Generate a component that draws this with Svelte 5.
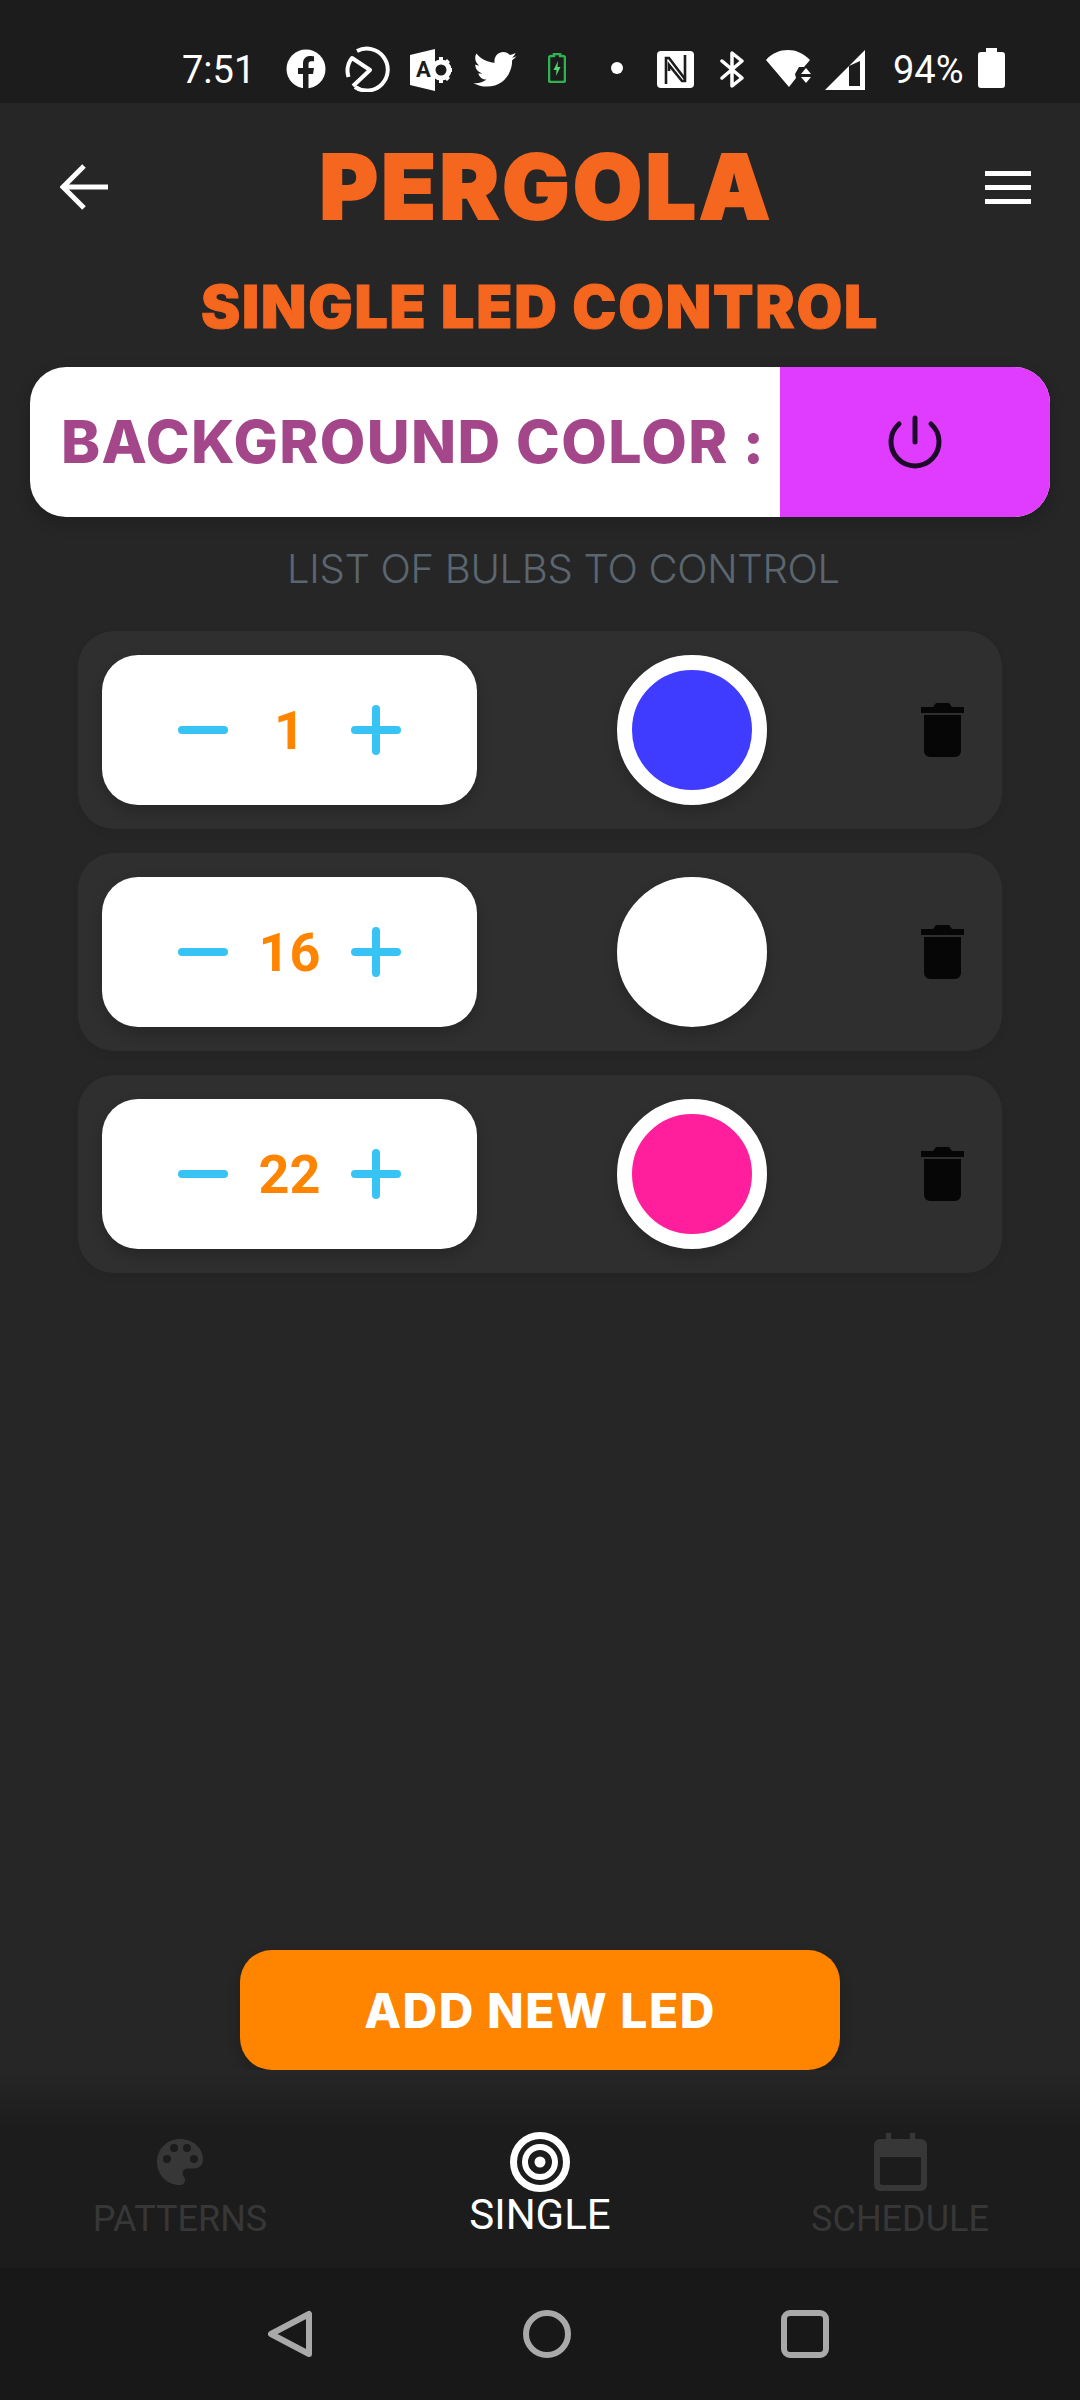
<script lang="ts">
const bulbs = [
  { id: 1, color: "#3f3bff" },
  { id: 16, color: "#ffffff" },
  { id: 22, color: "#ff1f9c" },
];
</script>

<div class="page">
  <div class="status">
    <span class="time">7:51</span>
    <!-- facebook -->
    <svg class="s-fb" width="40" height="40" viewBox="0 0 40 40">
      <circle cx="20" cy="20" r="19.5" fill="#fff" />
      <path d="M17 40V25h-5v-6h5v-4.500c0-5 3-7.500 7.300-7.500 2 0 3.700.3 3.700.3v5h-2.500c-2.500 0-3 1.300-3 2.900V19h5.500l-1 6H22.500v15z" fill="#1c1c1c" />
    </svg>
    <!-- pie style app icon -->
    <svg class="s-pie" width="46" height="46" viewBox="0 0 46 46" fill="none" stroke="#fff" stroke-width="4">
      <path d="M12 5A21 21 0 1 1 10 41" />
      <path d="M3.500 31A21 21 0 0 1 7 12L25 24 8 40" stroke-linejoin="round" />
    </svg>
    <!-- access / admin -->
    <svg class="s-acc" width="42" height="42" viewBox="0 0 42 42">
      <path d="M0 6 25 0v42L0 36z" fill="#fff" />
      <text x="6" y="28" class="acc-a">A</text>
      <circle cx="31" cy="21" r="8" fill="none" stroke="#fff" stroke-width="5" />
      <path d="M29 8h4v5h-4zM29 29h4v5h-4zM38 19h4v4h-4zM37 10l3 3-3 3-3-3zM37 26l3 3-3 3-3-3z" fill="#fff" />
    </svg>
    <!-- twitter -->
    <svg class="s-tw" width="44" height="36" viewBox="0 0 24 20">
      <path d="M24 2.400c-.9.400-1.800.700-2.800.800 1-.600 1.800-1.600 2.200-2.700-1 .6-2 1-3.100 1.200C19.300.7 18 0 16.600 0c-2.700 0-4.900 2.200-4.900 4.900 0 .4 0 .8.100 1.100C7.700 5.800 4.100 3.900 1.700.9c-.4.700-.7 1.600-.7 2.500 0 1.700.9 3.200 2.200 4.100-.8 0-1.600-.2-2.200-.6v.1c0 2.400 1.700 4.400 3.900 4.800-.4.100-.8.200-1.300.2-.3 0-.6 0-.9-.1.600 2 2.400 3.400 4.600 3.400-1.700 1.300-3.800 2.100-6.100 2.100-.4 0-.8 0-1.200-.1C2.200 18.300 4.800 19.200 7.500 19.200c9.100 0 14-7.500 14-14v-.6c1-.7 1.800-1.500 2.500-2.200z" fill="#fff" />
    </svg>
    <!-- charging battery -->
    <svg class="s-bat" width="18" height="30" viewBox="0 0 18 30">
      <path d="M6 1h6v2h3a2 2 0 0 1 2 2v22a2 2 0 0 1-2 2H3a2 2 0 0 1-2-2V5a2 2 0 0 1 2-2h3z" fill="none" stroke="#2fb350" stroke-width="2.500" />
      <path d="M10 8 5.500 17H8.500L8 23l4.500-9H9.500z" fill="#57d46f" />
    </svg>
    <span class="dot"></span>
    <!-- nfc -->
    <svg class="s-nfc" width="37" height="37" viewBox="0 0 37 37" fill="none" stroke="#1c1c1c" stroke-width="2.600">
      <rect width="37" height="37" rx="4" fill="#fff" stroke="none" />
      <path d="M9 33V7h3l16 21" />
      <path d="M28 4v26h-3L12 14v6" />
    </svg>
    <!-- bluetooth -->
    <svg class="s-bt" width="25" height="37" viewBox="0 0 25 37" fill="none" stroke="#fff" stroke-width="3.500">
      <path d="M2 10l20 17-10 8V2l10 8L2 27" stroke-linejoin="round" stroke-linecap="round" />
    </svg>
    <!-- wifi -->
    <svg class="s-wifi" width="46" height="37" viewBox="0 0 46 37">
      <path d="M0 10C6 3 14 0 22 0s15 3 22 10L38 17h-5L29 24l1 4-7 9z" fill="#fff" />
      <path d="M40 18l5 6H35zM35 27h10l-5 6z" fill="#fff" />
    </svg>
    <!-- signal -->
    <svg class="s-sig" width="40" height="40" viewBox="0 0 40 40">
      <path d="M0 40 40 0v40zM24 16 24 36h11V11z" fill="#fff" fill-rule="evenodd" />
    </svg>
    <span class="pct">94%</span>
    <!-- battery -->
    <svg class="s-full" width="27" height="40" viewBox="0 0 27 40">
      <path d="M8 0h11v4h5a3 3 0 0 1 3 3v30a3 3 0 0 1-3 3H3a3 3 0 0 1-3-3V7a3 3 0 0 1 3-3h5z" fill="#fff" />
    </svg>
  </div>

  <header class="top">
    <svg class="back" width="48" height="46" viewBox="0 0 48 46" fill="none" stroke="#fff" stroke-width="5">
      <path d="M48 23H4M24 2 3 23l21 21" />
    </svg>
    <h1>PERGOLA</h1>
    <div class="burger"><span></span><span></span><span></span></div>
  </header>

  <h2>SINGLE LED CONTROL</h2>

  <div class="bg-card">
    <div class="bg-label">BACKGROUND COLOR :</div>
    <div class="bg-swatch">
      <svg width="54" height="54" viewBox="0 0 54 54" fill="none" stroke="#1d0a29" stroke-width="5" stroke-linecap="round">
        <path d="M27 3v24" />
        <path d="M11 9A24 24 0 1 0 43 9" />
      </svg>
    </div>
  </div>

  <p class="list-title">LIST OF BULBS TO CONTROL</p>

  <div class="list">
    {#each bulbs as bulb}
      <div class="row">
        <div class="stepper">
          <span class="minus"></span>
          <span class="num">{bulb.id}</span>
          <span class="plus"></span>
        </div>
        <div class="color" style="background: {bulb.color}"></div>
        <svg class="trash" width="43" height="54" viewBox="0 0 43 54">
          <path d="M0 4h12l3-4h13l3 4h12v6H0zM3 12h37v36a6 6 0 0 1-6 6H9a6 6 0 0 1-6-6z" fill="#060606" />
        </svg>
      </div>
    {/each}
  </div>

  <div class="spacer"></div>

  <button class="add">ADD NEW LED</button>

  <nav class="tabs">
    <div class="tab">
      <div class="tab-icon">
        <svg width="46" height="46" viewBox="0 0 46 46">
          <path fill-rule="evenodd" d="M23 0C10 0 0 10 0 23s10 23 23 23c3 0 5-2 5-5 0-1.500-.6-2.500-1.300-3.500-.7-1-1.200-2-1.200-3 0-3 2.300-5 5-5h5C42 30 46 26 46 20 46 9 36 0 23 0zM10 24a4 4 0 1 1 0-8 4 4 0 0 1 0 8zM17 13a4 4 0 1 1 0-8 4 4 0 0 1 0 8zM30 13a4 4 0 1 1 0-8 4 4 0 0 1 0 8zM37 24a4 4 0 1 1 0-8 4 4 0 0 1 0 8z" fill="#373737" />
        </svg>
      </div>
      <span>PATTERNS</span>
    </div>
    <div class="tab active">
      <div class="tab-icon">
        <svg width="60" height="60" viewBox="0 0 60 60" fill="none" stroke="#fff">
          <circle cx="30" cy="30" r="26.500" stroke-width="7" />
          <circle cx="30" cy="30" r="15" stroke-width="6" />
          <circle cx="30" cy="30" r="5.500" fill="#fff" stroke="none" />
        </svg>
      </div>
      <span>SINGLE</span>
    </div>
    <div class="tab">
      <div class="tab-icon">
        <svg width="53" height="58" viewBox="0 0 53 58">
          <path fill-rule="evenodd" d="M12 0h5v6h19V0h5v6h6a6 6 0 0 1 6 6v40a6 6 0 0 1-6 6H6a6 6 0 0 1-6-6V12a6 6 0 0 1 6-6h6zM6 24v26a2 2 0 0 0 2 2h37a2 2 0 0 0 2-2V24z" fill="#373737" />
        </svg>
      </div>
      <span>SCHEDULE</span>
    </div>
  </nav>

  <div class="sysnav">
    <svg width="46" height="48" viewBox="0 0 46 48" fill="none" stroke="#a9a9a9" stroke-width="6" stroke-linejoin="round">
      <path d="M42 4v40L4 24z" />
    </svg>
    <svg width="48" height="48" viewBox="0 0 48 48" fill="none" stroke="#a9a9a9" stroke-width="6">
      <circle cx="24" cy="24" r="21" />
    </svg>
    <svg width="48" height="48" viewBox="0 0 48 48" fill="none" stroke="#a9a9a9" stroke-width="6">
      <rect x="3" y="3" width="42" height="42" rx="6" />
    </svg>
  </div>
</div>

<style>
  :global(body) {
    margin: 0;
    background: #262626;
  }

  .page {
    width: 1080px;
    height: 2400px;
    display: flex;
    flex-direction: column;
    background: #262626;
    font-family: Inter, "Noto Sans", sans-serif;
    overflow: hidden;
  }

  .status {
    height: 103px;
    flex: none;
    box-sizing: border-box;
    padding: 42px 0 0 182px;
    display: flex;
    align-items: flex-start;
    background: #1c1c1c;
    color: #fff;
    font-family: Roboto, sans-serif;
  }

  .time {
    font-size: 38px;
    line-height: 44px;
    width: 104px;
    margin-top: 6px;
  }

  .status svg {
    flex: none;
  }

  .s-fb { margin: 7px 0 0 0; }
  .s-pie { margin: 4px 0 0 19px; }
  .s-acc { margin: 7px 0 0 19px; }
  .s-tw { margin: 10px 0 0 21px; }
  .s-bat { margin: 11px 0 0 31px; }
  .s-nfc { margin: 9px 0 0 34px; }
  .s-bt { margin: 9px 0 0 26px; }
  .s-wifi { margin: 8px 0 0 21px; }
  .s-sig { margin: 8px 0 0 13px; }
  .s-full { margin: 6px 0 0 13px; }

  .acc-a {
    font-family: Roboto, sans-serif;
    font-size: 22px;
    font-weight: 700;
    fill: #1c1c1c;
  }

  .dot {
    width: 12px;
    height: 12px;
    border-radius: 50%;
    background: #fff;
    margin: 20px 0 0 45px;
    flex: none;
  }

  .pct {
    font-size: 38px;
    line-height: 44px;
    width: 72px;
    margin: 6px 0 0 28px;
    white-space: nowrap;
  }

  .top {
    height: 128px;
    flex: none;
    box-sizing: border-box;
    padding: 40px 49px 0 60px;
    display: flex;
    align-items: center;
    justify-content: space-between;
  }

  h1 {
    margin: 0;
    font-size: 89px;
    line-height: 88px;
    font-weight: 900;
    letter-spacing: 3.5px;
    color: #f5661f;
    -webkit-text-stroke: 2px #f5661f;
  }

  .burger {
    width: 46px;
    display: flex;
    flex-direction: column;
    gap: 9px;
  }

  .burger span {
    height: 5px;
    background: #fff;
  }

  h2 {
    margin: 40px 0 0;
    font-size: 59px;
    line-height: 72px;
    font-weight: 900;
    letter-spacing: 1.8px;
    text-align: center;
    color: #f5661f;
    -webkit-text-stroke: 1px #f5661f;
  }

  .bg-card {
    margin: 24px 30px 0;
    height: 150px;
    flex: none;
    display: flex;
    border-radius: 36px;
    overflow: hidden;
    background: #fff;
    box-shadow: 0 6px 16px rgba(0, 0, 0, 0.2);
  }

  .bg-label {
    width: 750px;
    box-sizing: border-box;
    padding: 39px 0 0 31px;
    font-size: 59px;
    line-height: 72px;
    font-weight: 800;
    letter-spacing: 1.4px;
    color: #a3478a;
    white-space: nowrap;
  }

  .bg-swatch {
    flex: 1;
    display: flex;
    align-items: center;
    justify-content: center;
    background: #e03cff;
  }

  .list-title {
    margin: 27px 0 0 287px;
    font-size: 40px;
    line-height: 50px;
    font-weight: 300;
    letter-spacing: -0.3px;
    color: #5b6670;
    white-space: nowrap;
  }

  .list {
    margin: 37px 78px 0;
    display: flex;
    flex-direction: column;
    gap: 24px;
  }

  .row {
    height: 198px;
    box-sizing: border-box;
    padding: 24px;
    display: flex;
    align-items: flex-start;
    border-radius: 36px;
    background: #2f2f2f;
    box-shadow: 0 4px 10px rgba(0, 0, 0, 0.06);
  }

  .stepper {
    width: 375px;
    height: 150px;
    flex: none;
    box-sizing: border-box;
    padding: 0 76px;
    display: flex;
    align-items: center;
    justify-content: space-between;
    border-radius: 36px;
    background: #fff;
    box-shadow: 0 6px 14px rgba(0, 0, 0, 0.2);
  }

  .minus,
  .plus {
    position: relative;
    width: 50px;
    height: 8px;
    border-radius: 4px;
    background: #38c3f5;
    flex: none;
  }

  .plus::after {
    content: "";
    position: absolute;
    left: 21px;
    top: -21px;
    width: 8px;
    height: 50px;
    border-radius: 4px;
    background: #38c3f5;
  }

  .num {
    font-family: Roboto, sans-serif;
    font-size: 54px;
    font-weight: 700;
    color: #ff8400;
  }

  .color {
    width: 150px;
    height: 150px;
    flex: none;
    box-sizing: border-box;
    margin-left: 140px;
    border: 15px solid #fff;
    border-radius: 50%;
    box-shadow: 0 6px 14px rgba(0, 0, 0, 0.2);
  }

  .trash {
    flex: none;
    margin: 48px 0 0 154px;
  }

  .spacer {
    flex: 1;
  }

  .add {
    align-self: center;
    width: 600px;
    height: 120px;
    flex: none;
    border: 0;
    border-radius: 32px;
    background: #ff8400;
    color: #fff;
    font-family: inherit;
    font-size: 48px;
    font-weight: 800;
    letter-spacing: 1.5px;
    box-shadow: 0 6px 14px rgba(0, 0, 0, 0.2);
  }

  .tabs {
    height: 198px;
    flex: none;
    display: grid;
    grid-template-columns: 360px 360px 360px;
    background: linear-gradient(#262626 0, #1c1c1c 60px);
  }

  .tab {
    display: flex;
    flex-direction: column;
    align-items: center;
    padding-top: 62px;
    color: #373737;
    font-family: Roboto, sans-serif;
    font-size: 36px;
    line-height: 40px;
  }

  .tab-icon {
    height: 60px;
    display: flex;
    align-items: center;
  }

  .tab span {
    margin-top: 7px;
  }

  .tab.active {
    color: #fff;
    font-size: 42px;
    line-height: 44px;
  }

  .tab.active span {
    margin-top: 1px;
  }

  .sysnav {
    height: 132px;
    flex: none;
    box-sizing: border-box;
    padding-left: 16px;
    display: flex;
    align-items: center;
    justify-content: center;
    gap: 210px;
    background: #181818;
  }
</style>
